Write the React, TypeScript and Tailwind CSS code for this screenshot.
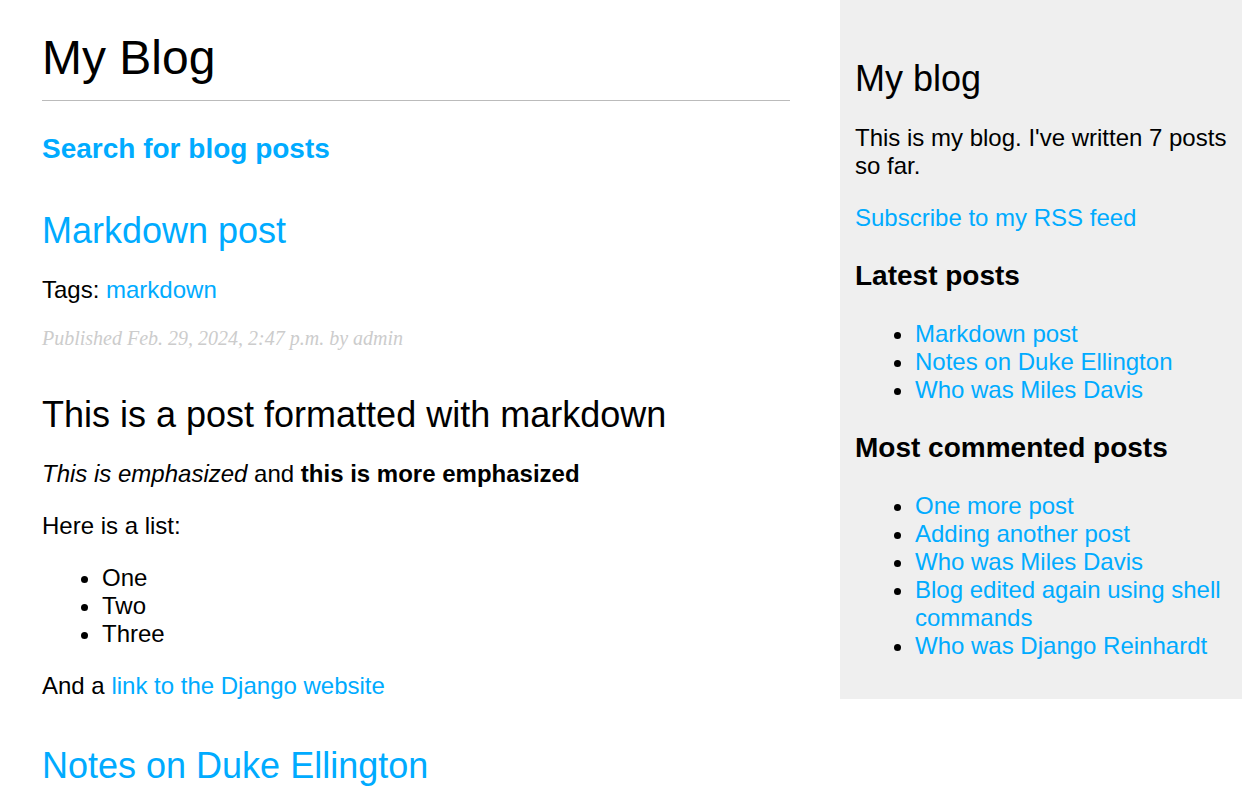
const link = "text-[#00abff] no-underline";

const latest = ["Markdown post", "Notes on Duke Ellington", "Who was Miles Davis"];
const commented = [
  "One more post",
  "Adding another post",
  "Who was Miles Davis",
  "Blog edited again using shell commands",
  "Who was Django Reinhardt",
];

export default function App() {
  return (
    <div className="flex items-start justify-between bg-white text-black font-['Liberation_Sans',Arial,Helvetica,sans-serif] text-[24px] leading-[normal] min-h-[811px]">
      <div className="ml-[42px] w-[748px] shrink-0">
        <h1 className="text-[48px] font-normal mt-[30px] mb-[32px] pb-[15px] border-b border-[#bbb]">
          My Blog
        </h1>
        <h3 className="text-[28px] font-bold my-[28px]">
          <a href="#" className={link}>Search for blog posts</a>
        </h3>

        <h2 className="text-[36px] font-normal mt-[45px] mb-0">
          <a href="#" className={link}>Markdown post</a>
        </h2>
        <p className="my-[24px]">
          Tags: <a href="#" className={link}>markdown</a>
        </p>
        <p className="my-[18px] font-['Liberation_Serif',Georgia,serif] italic text-[20px] leading-[21px] text-[#ccc]">
          Published Feb. 29, 2024, 2:47 p.m. by admin
        </p>
        <h2 className="text-[36px] font-normal mt-[45px] mb-0">
          This is a post formatted with markdown
        </h2>
        <p className="my-[24px]">
          <em>This is emphasized</em> and <strong className="font-bold">this is more emphasized</strong>
        </p>
        <p className="my-[24px]">Here is a list:</p>
        <ul className="my-[24px] pl-[60px] list-disc">
          <li>One</li>
          <li>Two</li>
          <li>Three</li>
        </ul>
        <p className="my-[24px]">
          And a <a href="#" className={link}>link to the Django website</a>
        </p>

        <h2 className="text-[36px] font-normal mt-[45px] mb-0">
          <a href="#" className={link}>Notes on Duke Ellington</a>
        </h2>
      </div>

      <div className="w-[402px] shrink-0 bg-[#efefef] p-[15px] flow-root">
        <h2 className="text-[36px] font-normal mt-[43px] mb-0">My blog</h2>
        <p className="my-[24px]">This is my blog. I've written 7 posts so far.</p>
        <p className="my-[24px]">
          <a href="#" className={link}>Subscribe to my RSS feed</a>
        </p>
        <h3 className="text-[28px] font-bold my-[28px]">Latest posts</h3>
        <ul className="my-[24px] pl-[60px] list-disc">
          {latest.map((t) => (
            <li key={t}>
              <a href="#" className={link}>{t}</a>
            </li>
          ))}
        </ul>
        <h3 className="text-[28px] font-bold my-[28px]">Most commented posts</h3>
        <ul className="my-[24px] pl-[60px] list-disc">
          {commented.map((t) => (
            <li key={t}>
              <a href="#" className={link}>{t}</a>
            </li>
          ))}
        </ul>
      </div>
    </div>
  );
}
